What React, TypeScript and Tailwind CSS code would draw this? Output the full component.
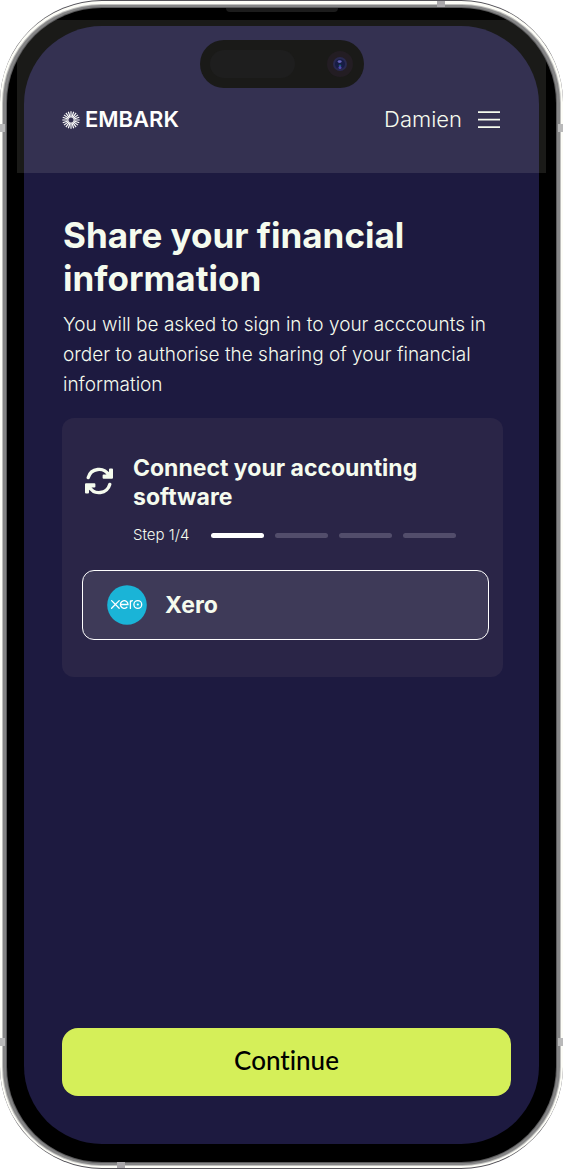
import type { ReactNode } from 'react';

const STEPS = 4;
const CURRENT_STEP = 1;

function Sunburst() {
  const rays = Array.from({ length: 20 }, (_, i) => i * 18);
  return (
    <svg viewBox="0 0 18 18" className="size-[18px] shrink-0" stroke="#fff" strokeWidth="1.15" aria-hidden="true">
      {rays.map((angle) => (
        <line key={angle} x1="9" y1="0.3" x2="9" y2="6.4" transform={`rotate(${angle} 9 9)`} />
      ))}
    </svg>
  );
}

function SyncIcon() {
  return (
    <svg viewBox="0 0 28 28" className="size-7 shrink-0 overflow-visible" fill="none" stroke="#f5fbee" aria-hidden="true">
      <g strokeWidth="3.4" strokeLinecap="round">
        <path d="M3.2 10.6 A11.2 11.2 0 0 1 23.8 8.2" />
        <path d="M24.8 17.4 A11.2 11.2 0 0 1 4.2 19.8" />
      </g>
      <g fill="#f5fbee" strokeWidth="2" strokeLinejoin="round">
        <path d="M27 2.4 V10.8 H18.6 V8.6 H22 L25 5 V2.4 Z" />
        <path d="M1 25.6 V17.2 H9.4 V19.4 H6 L3 23 V25.6 Z" />
      </g>
    </svg>
  );
}

function XeroLogo() {
  return (
    <svg viewBox="0 0 40 40" className="size-10 shrink-0" aria-hidden="true">
      <circle cx="20" cy="20" r="19.8" fill="#1ab4d7" />
      <g fill="none" stroke="#fff" strokeWidth="1.3" strokeLinecap="round">
        <path d="M4.6 15.6 L12.2 23.2 M12.2 15.6 L4.6 23.2" />
        <path d="M13.6 19.5 H21 A3.8 3.8 0 1 0 19.9 22.2" />
        <path d="M23.4 23.4 V15.8 M23.4 18.2 C23.4 16.6 24.2 15.7 25.4 15.7" />
        <circle cx="30.8" cy="19.5" r="3.9" />
      </g>
      <circle cx="30.8" cy="19.5" r="1.1" fill="#fff" />
    </svg>
  );
}

function MenuIcon() {
  return (
    <svg viewBox="0 0 22 18" className="h-[18px] w-[22px]" stroke="#f5fbee" strokeWidth="1.8" aria-hidden="true">
      <path d="M0 1.2 H22 M0 8.7 H22 M0 16.2 H22" />
    </svg>
  );
}

function DynamicIsland() {
  return (
    <div className="absolute top-8 left-1/2 flex h-12 w-[164px] -translate-x-1/2 items-center justify-between rounded-full bg-[#1a1a18] pr-[11px] pl-[10px]">
      <div className="h-7 w-[85px] rounded-full bg-[#1e1e1e]" />
      <svg viewBox="0 0 26 26" className="size-[26px]" aria-hidden="true">
        <circle cx="13" cy="13" r="13" fill="#231d23" />
        <circle cx="13" cy="13" r="7" fill="#29294f" />
        <circle cx="13" cy="13" r="5" fill="#171c45" />
        <ellipse cx="12.6" cy="10.6" rx="2" ry="1.4" fill="#6561b8" />
        <circle cx="13" cy="14.6" r="1.2" fill="#176070" />
        <circle cx="13" cy="16.4" r="1.5" fill="#5149b0" />
      </svg>
    </div>
  );
}

function PhoneFrame({ children }: { children: ReactNode }) {
  return (
    <div className="relative h-[1169px] rounded-[102px] border-y border-[#55535a] bg-[#fdfdf7] px-[2px] pt-[3px] pb-[2px]">
      <div className="h-full rounded-[99px] bg-[#c0c0be] p-px">
        <div className="h-full rounded-[98px] bg-[#858586] px-[3px] py-[2px]">
          <div className="h-full rounded-[96px] bg-[#5b5b5c] p-px">
            <div className="relative flex h-full flex-col overflow-hidden rounded-[95px] bg-black px-[17px] py-[18px]">
              {children}
              <div className="pointer-events-none absolute inset-x-[10px] top-3 h-[153px] bg-[#fffff0]/10" />
              <div className="absolute top-0 left-1/2 h-1 w-28 -translate-x-1/2 rounded-b bg-[#1c1c1c]" />
              <DynamicIsland />
            </div>
          </div>
        </div>
      </div>
      <i className="absolute top-[123px] left-0 h-2 w-[5px] bg-[#b9b9b9]" />
      <i className="absolute top-[123px] right-0 h-2 w-[5px] bg-[#b9b9b9]" />
      <i className="absolute bottom-[122px] left-0 h-2 w-[5px] bg-[#b9b9b9]" />
      <i className="absolute right-0 bottom-[122px] h-2 w-[5px] bg-[#b9b9b9]" />
      <i className="absolute top-0 right-[118px] h-[6px] w-2 bg-[#aaa8ab]" />
      <i className="absolute bottom-0 left-[117px] h-[6px] w-2 bg-[#aaa8ab]" />
    </div>
  );
}

function Progress() {
  return (
    <div className="mt-[13px] flex items-center gap-[22px] pl-[51px]">
      <span className="text-[15px] leading-5 font-light">Step {CURRENT_STEP}/{STEPS}</span>
      <div className="flex gap-[11px]">
        {Array.from({ length: STEPS }, (_, i) => (
          <span key={i} className={i < CURRENT_STEP ? 'h-[5px] w-[53px] rounded-full bg-white' : 'h-[5px] w-[53px] rounded-full bg-[#524d6b]'} />
        ))}
      </div>
    </div>
  );
}

export default function App() {
  return (
    <div className="min-h-[1170px] bg-white font-['Inter',sans-serif] text-[#f5fbee]">
      <PhoneFrame>
        <div className="flex flex-1 flex-col rounded-[78px] bg-[#1d1a40] pr-7 pb-12 pl-[38px]">
          <header className="flex h-[147px] items-center justify-between pt-10 pr-[11px]">
            <a href="#" className="flex items-center gap-[5px] text-[22px] font-semibold text-white">
              <Sunburst />
              EMBARK
            </a>
            <div className="flex items-center gap-4 text-[22px] font-light">
              <span>Damien</span>
              <button type="button" aria-label="Menu"><MenuIcon /></button>
            </div>
          </header>
          <main className="flex flex-1 flex-col">
            <div className="pr-2">
              <h1 className="mt-[41px] ml-px text-[35px] leading-[43px] font-bold">Share your financial information</h1>
              <p className="mt-[10px] ml-px text-[19px] leading-[30px] font-light">
                You will be asked to sign in to your acccounts in order to authorise the sharing of your financial information
              </p>
              <section className="mt-[18px] rounded-xl bg-[#2a2547] pt-9 pr-[14px] pb-[37px] pl-5">
                <div className="flex items-start gap-5 pl-[3px]">
                  <span className="pt-[13px]"><SyncIcon /></span>
                  <h2 className="text-[23px] leading-[29px] font-bold">Connect your accounting software</h2>
                </div>
                <Progress />
                <button type="button" className="mt-[25px] flex h-[70px] w-full items-center gap-[18px] rounded-xl border border-white bg-[#3e3a58] px-6 text-[23px] font-bold">
                  <XeroLogo />
                  Xero
                </button>
              </section>
            </div>
            <button type="button" className="mt-auto h-[68px] w-full rounded-2xl bg-[#d5ef59] pb-1 font-['Lato',sans-serif] text-[26px] font-medium text-black [font-variant-ligatures:none]">
              Continue
            </button>
          </main>
        </div>
      </PhoneFrame>
    </div>
  );
}
